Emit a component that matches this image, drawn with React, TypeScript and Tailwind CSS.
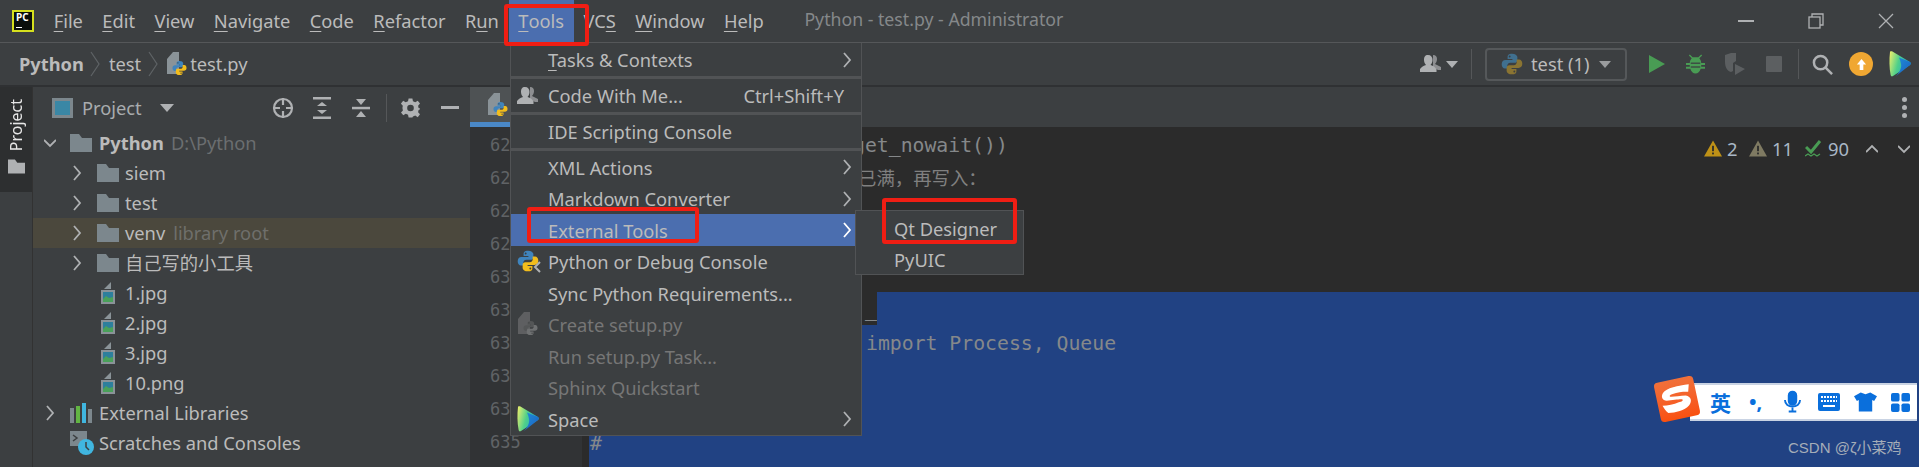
import React from 'react'

// PyCharm window with the Tools > External Tools menu open

const uiFont = { fontFamily: '"Noto Sans", "Noto Sans CJK SC", sans-serif' }

function Folder({ className = 'w-[22px] h-[18px]' }: { className?: string }) {
  return (
    <svg viewBox="0 0 22 18" className={className}>
      <path d="M0 0h9l3 4h10v14H0z" fill="#7c878d" />
    </svg>
  )
}

function Chevron({ down = false, color = '#afb1b3' }: { down?: boolean; color?: string }) {
  return (
    <svg viewBox="0 0 12 16" className="w-[12px] h-[16px]" fill="none" stroke={color} strokeWidth="1.8">
      {down ? <path d="M0 5l6 6 6-6" /> : <path d="M3 1l6 7-6 7" />}
    </svg>
  )
}

function PythonLogo({ className = 'w-[18px] h-[18px]', blue = '#3f84bd', yellow = '#f2bd1c' }: { className?: string; blue?: string; yellow?: string }) {
  const snake = 'M8 .5C5.4.5 4.8 1.6 4.8 2.8v1.6H8.300v.7H3.200C1.700 5.100.5 6.200.5 8.100c0 1.900 1 3.100 2.400 3.100h1.700V9.300c0-1.300 1-2.200 2.100-2.200h3.300c1 0 1.900-.8 1.900-1.900V2.800C11.500 1.500 10.500.5 8 .5z'
  return (
    <svg viewBox="0 0 16 16" className={className}>
      <path d={snake} fill={blue} />
      <path d={snake} fill={yellow} transform="rotate(180 8 8)" />
      <circle cx="6.300" cy="2.500" r=".7" fill="#3c3f41" />
      <circle cx="9.700" cy="13.500" r=".7" fill="#3c3f41" />
    </svg>
  )
}

function SpaceLogo({ className = 'w-[22px] h-[26px]' }: { className?: string }) {
  return (
    <svg viewBox="0 0 22 26" className={className}>
      <defs>
        <linearGradient id="spaceLeft" x1="0" y1="0" x2="1" y2="0.3">
          <stop offset="0" stopColor="#f4f16a" />
          <stop offset="0.5" stopColor="#4fd08a" />
          <stop offset="1" stopColor="#1fa7c9" />
        </linearGradient>
        <linearGradient id="spaceRight" x1="0" y1="0" x2="1" y2="1">
          <stop offset="0" stopColor="#1f8fd8" />
          <stop offset="1" stopColor="#1c5fc0" />
        </linearGradient>
      </defs>
      <path d="M1 1c0-1 1-1 2-.7L21 11c1 .8 1 2 0 3L4 25c-1 .7-2 .4-2.300-.7C.2 17 .2 8 1 1z" fill="url(#spaceLeft)" />
      <path d="M10 6.500L21 11c1 .8 1 2 0 3L7 25c3-3 6-8 5-12-.3-2.300-1-4.500-2-6.500z" fill="url(#spaceRight)" />
    </svg>
  )
}

function FileShape({ children }: { children: React.ReactNode }) {
  return (
    <span className="relative w-[20px] h-[24px] block">
      <svg viewBox="0 0 20 24" className="absolute inset-0 w-[20px] h-[24px]">
        <path d="M7 0h6v22H1V7z" fill="#8a9398" />
      </svg>
      {children}
    </span>
  )
}

function PyFile() {
  return (
    <FileShape>
      <span className="absolute left-[6px] top-[8px]">
        <PythonLogo className="w-[15px] h-[16px]" />
      </span>
    </FileShape>
  )
}

function ImageFile() {
  return (
    <svg viewBox="0 0 16 22" className="w-[16px] h-[22px]">
      <path d="M11 0v7H4z" fill="#8a9398" />
      <rect x="1" y="8" width="14" height="14" fill="#8a9398" />
      <rect x="3" y="10" width="10" height="10" fill="#2d7f9c" />
      <path d="M3 20v-3l3-3 3 2 4-1v5z" fill="#4aa15a" />
    </svg>
  )
}

function UserIcon({ className = 'w-[22px] h-[20px]', color = '#afb1b3' }: { className?: string; color?: string }) {
  return (
    <svg viewBox="0 0 22 20" className={className} fill={color}>
      <path d="M13 1c3 0 4 2 4 4 0 2-1 4-2 5l6 3v3h-3l-5-3z" opacity=".7" />
      <path d="M8 1c3 0 4.500 2 4.500 5 0 2-1 4-2 5 3 1 5 2.500 6 4v3H0v-3c1-1.500 3-3 6-4-1-1-2-3-2-5 0-3 1-5 4-5z" />
    </svg>
  )
}

function Triangle({ color }: { color: string }) {
  return (
    <svg viewBox="0 0 20 18" className="w-[18px] h-[17px]">
      <path d="M10 0l10 18H0z" fill={color} />
      <rect x="9" y="6" width="2" height="6" fill="#2b2b2b" />
      <rect x="9" y="13.500" width="2" height="2" fill="#2b2b2b" />
    </svg>
  )
}

function TopMenu() {
  const items: [string, string, string][] = [
    ['', 'F', 'ile'],
    ['', 'E', 'dit'],
    ['', 'V', 'iew'],
    ['', 'N', 'avigate'],
    ['', 'C', 'ode'],
    ['', 'R', 'efactor'],
    ['R', 'u', 'n'],
  ]
  return (
    <div className="flex items-center h-full text-[18.300px] text-[#bbbbbb]">
      {items.map(([pre, key, post]) => (
        <span key={key + post} className="px-[9.700px] h-full flex items-center whitespace-pre">
          {pre}<u className="underline-offset-[3px]">{key}</u>{post}
        </span>
      ))}
      <span className="px-[9.700px] h-full flex items-center bg-[#4b6eaf] whitespace-pre"><u className="underline-offset-[3px]">T</u>ools</span>
      <span className="px-[9.700px] h-full flex items-center whitespace-pre">VC<u className="underline-offset-[3px]">S</u></span>
      <span className="px-[9.700px] h-full flex items-center whitespace-pre"><u className="underline-offset-[3px]">W</u>indow</span>
      <span className="px-[9.700px] h-full flex items-center whitespace-pre"><u className="underline-offset-[3px]">H</u>elp</span>
    </div>
  )
}

function TitleBar() {
  return (
    <div className="h-[43px] flex items-center border-b border-[#555759] shrink-0">
      <div className="w-[44px] pl-[12px] flex items-center">
        <div className="w-[22px] h-[22px] border-2 border-[#d6e01e] bg-[#0b0f0c] relative">
          <span className="absolute left-[2px] top-[0px] text-[10px] font-bold text-white leading-[11px]">PC</span>
          <span className="absolute left-[2px] bottom-[2px] w-[6px] h-[1px] bg-white" />
        </div>
      </div>
      <TopMenu />
      <span className="ml-[31px] text-[17.700px] text-[#85888a] whitespace-nowrap -mt-[3px]">Python - test.py - Administrator</span>
      <div className="ml-auto flex items-center h-full pr-[25px]">
        <svg viewBox="0 0 16 2" className="w-[16px] h-[2px] mr-[54px]"><rect width="16" height="2" fill="#afb1b3" /></svg>
        <svg viewBox="0 0 16 16" className="w-[16px] h-[16px] mr-[54px]" fill="none" stroke="#afb1b3" strokeWidth="1.300">
          <rect x="1" y="4" width="11" height="11" />
          <path d="M4 4V1h11v11h-3" />
        </svg>
        <svg viewBox="0 0 16 16" className="w-[16px] h-[16px]" fill="none" stroke="#afb1b3" strokeWidth="1.300"><path d="M1 1l14 14M15 1L1 15" /></svg>
      </div>
    </div>
  )
}

function NavBar() {
  return (
    <div className="h-[44px] flex items-center border-b-[2px] border-[#2f3133] shrink-0 text-[18.300px] text-[#bbbbbb]">
      <span className="pl-[19px] font-bold">Python</span>
      <svg viewBox="0 0 10 26" className="w-[10px] h-[26px] mx-[6px]" fill="none" stroke="#5f6366" strokeWidth="1.200"><path d="M1 1l8 12-8 12" /></svg>
      <span className="ml-[3px]">test</span>
      <svg viewBox="0 0 10 26" className="w-[10px] h-[26px] mx-[7px]" fill="none" stroke="#5f6366" strokeWidth="1.200"><path d="M1 1l8 12-8 12" /></svg>
      <span className="ml-[1px]"><PyFile /></span>
      <span className="ml-[4px]">test.py</span>
      <div className="ml-auto flex items-center pr-[8px]">
        <UserIcon />
        <svg viewBox="0 0 12 7" className="w-[12px] h-[7px] ml-[4px]"><path d="M0 0h12L6 7z" fill="#afb1b3" /></svg>
        <div className="w-[1px] h-[30px] bg-[#555759] ml-[13px] mr-[13px]" />
        <div className="w-[142px] h-[33px] border-2 border-[#55585a] rounded-[4px] flex items-center pl-[14px]">
          <PythonLogo className="w-[22px] h-[22px]" blue="#40708f" yellow="#8a7432" />
          <span className="ml-[8px]">test (1)</span>
          <svg viewBox="0 0 12 7" className="w-[12px] h-[7px] ml-[10px]"><path d="M0 0h12L6 7z" fill="#9a9c9e" /></svg>
        </div>
        <div className="w-[39px] flex justify-center ml-[10px]">
          <svg viewBox="0 0 16 18" className="w-[16px] h-[18px]"><path d="M0 0l16 9-16 9z" fill="#499c54" /></svg>
        </div>
        <div className="w-[39px] flex justify-center">
          <svg viewBox="0 0 20 20" className="w-[19px] h-[20px]" fill="#499c54">
            <path d="M4 0l3 3h6l3-3 1 1-3 3c1 1 2 3 2 5h4v2h-4v2h4v2h-4.500c-1 3-3 5-5.500 5s-4.500-2-5.500-5H0v-2h4v-2H0V9h4c0-2 1-4 2-5L3 1z" />
            <rect x="5" y="8.500" width="10" height="1.300" fill="#3c3f41" />
            <rect x="5" y="12.500" width="10" height="1.300" fill="#3c3f41" />
          </svg>
        </div>
        <div className="w-[39px] flex justify-center">
          <svg viewBox="0 0 22 22" className="w-[22px] h-[22px]">
            <path d="M1 2l6-2h5v8l-3 2v8l-2 1C3 18 1 14 1 9z" fill="#5c5f61" />
            <path d="M11 11l10 5-10 6z" fill="#5c5f61" />
          </svg>
        </div>
        <div className="w-[39px] flex justify-center"><div className="w-[16px] h-[16px] bg-[#5c5f61] rounded-[1px]" /></div>
        <div className="w-[1px] h-[30px] bg-[#555759] ml-[5px]" />
        <div className="w-[47px] flex justify-center">
          <svg viewBox="0 0 22 22" className="w-[21px] h-[21px]" fill="none" stroke="#afb1b3" strokeWidth="2.600">
            <circle cx="9" cy="9" r="7" />
            <path d="M14 14l7 7" />
          </svg>
        </div>
        <div className="w-[24px] h-[24px] rounded-full bg-[#f0a732] flex items-center justify-center ml-[3px]">
          <svg viewBox="0 0 12 12" className="w-[11px] h-[11px]" fill="#ffffff"><path d="M6 0l5 6H8v6H4V6H1z" /></svg>
        </div>
        <div className="ml-[16px]"><SpaceLogo /></div>
      </div>
    </div>
  )
}

const treeRows = [
  { label: 'siem', icon: 'folder' },
  { label: 'test', icon: 'folder' },
]

const imageFiles = ['1.jpg', '2.jpg', '3.jpg', '10.png']

function TreeFolderRow({ label, hint, className = '' }: { label: string; hint?: string; className?: string }) {
  return (
    <div className={`h-[30px] flex items-center pl-[38px] ${className}`}>
      <span className="w-[26px] flex"><Chevron /></span>
      <Folder />
      <span className="ml-[6px]">{label}</span>
      {hint && <span className="ml-[8px] text-[#6f6f6b]">{hint}</span>}
    </div>
  )
}

function ProjectPanel() {
  return (
    <div className="w-[437px] shrink-0 flex flex-col text-[18.300px] text-[#bbbbbb]">
      <div className="h-[41px] flex items-center pl-[19px]">
        <div className="w-[21px] h-[20px] border-[3px] border-[#7c878d] bg-[#3a87a5]" />
        <span className="ml-[9px] text-[#a9acae]">Project</span>
        <svg viewBox="0 0 14 8" className="w-[14px] h-[8px] ml-[18px]"><path d="M0 0h14L7 8z" fill="#afb1b3" /></svg>
        <div className="ml-[98px] flex items-center">
          <svg viewBox="0 0 22 22" className="w-[22px] h-[22px]" fill="none" stroke="#afb1b3" strokeWidth="2.200">
            <circle cx="11" cy="11" r="9" />
            <path d="M11 1v7M11 14v7M1 11h7M14 11h7" />
          </svg>
          <svg viewBox="0 0 18 22" className="w-[18px] h-[22px] ml-[19px]" fill="#afb1b3">
            <rect width="18" height="2.500" />
            <rect y="19.500" width="18" height="2.500" />
            <path d="M9 5l5 4H4zM9 17l5-4H4z" />
          </svg>
          <svg viewBox="0 0 18 22" className="w-[18px] h-[22px] ml-[21px]" fill="#afb1b3">
            <rect y="9.800" width="18" height="2.500" />
            <path d="M9 8L4 2h10zM9 14l5 6H4z" />
          </svg>
          <div className="w-[1px] h-[28px] bg-[#555759] ml-[16px]" />
          <svg viewBox="0 0 20 20" className="w-[19px] h-[20px] ml-[14px]">
            <path fillRule="evenodd" fill="#afb1b3" d="M8 0h4l.600 3 2.400 1 2.600-1.700 2.400 3-2 2.200.500 2.500 2.500 1v0l-2.500 1-.500 2.500 2 2.200-2.400 3-2.600-1.700-2.400 1L12 20H8l-.600-3-2.400-1-2.600 1.700-2.400-3 2-2.200L1.500 10 1.900 7.500l-2-2.200 2.400-3L4.900 4l2.500-1zM10 6.500a3.500 3.500 0 100 7 3.500 3.500 0 000-7z" />
          </svg>
          <div className="w-[18px] h-[3px] bg-[#afb1b3] ml-[21px]" />
        </div>
      </div>
      <div className="h-[30px] flex items-center pl-[11px]">
        <span className="w-[26px] flex"><Chevron down /></span>
        <Folder />
        <span className="ml-[7px] font-bold">Python</span>
        <span className="ml-[7px] text-[#6b6e70]">D:\Python</span>
      </div>
      {treeRows.map(r => <TreeFolderRow key={r.label} label={r.label} />)}
      <TreeFolderRow label="venv" hint="library root" className="bg-[#4b483d]" />
      <TreeFolderRow label="自己写的小工具" />
      {imageFiles.map(name => (
        <div key={name} className="h-[30px] flex items-center pl-[67px]">
          <ImageFile />
          <span className="ml-[9px]">{name}</span>
        </div>
      ))}
      <div className="h-[30px] flex items-center pl-[11px]">
        <span className="w-[26px] flex"><Chevron /></span>
        <svg viewBox="0 0 22 20" className="w-[22px] h-[20px]">
          <rect x="0" y="5" width="4" height="15" fill="#7c878d" />
          <rect x="6" y="3" width="4" height="17" fill="#62b543" />
          <rect x="12" y="0" width="4" height="20" fill="#40b6e0" />
          <rect x="18" y="6" width="4" height="14" fill="#7c878d" />
        </svg>
        <span className="ml-[7px]">External Libraries</span>
      </div>
      <div className="h-[30px] flex items-center pl-[37px]">
        <svg viewBox="0 0 24 24" className="w-[24px] h-[24px]">
          <rect x="0" y="0" width="17" height="15" fill="#7c878d" />
          <path d="M3 4l4 3-4 3" stroke="#3c3f41" strokeWidth="1.500" fill="none" />
          <circle cx="16" cy="16" r="8" fill="#40b6e0" />
          <path d="M16 11v5l3 3" stroke="#3c3f41" strokeWidth="1.500" fill="none" />
        </svg>
        <span className="ml-[5px]">Scratches and Consoles</span>
      </div>
    </div>
  )
}

const lineNumbers = [626, 627, 628, 629, 630, 631, 632, 633, 634, 635]

function Editor() {
  const monoText = 'font-["DejaVu_Sans_Mono",monospace] text-[19.800px] text-[#85888a] whitespace-pre'
  return (
    <div className="flex-1 min-w-0 flex flex-col relative">
      <div className="h-[40px] flex shrink-0 relative">
        <div className="w-[40px] h-full bg-[#4e5254] border-b-[5px] border-[#4a88c7] flex items-center pl-[17px]">
          <PyFile />
        </div>
        <div className="ml-auto flex flex-col gap-[3px] justify-center pr-[12px]">
          <span className="w-[5px] h-[5px] rounded-full bg-[#afb1b3]" />
          <span className="w-[5px] h-[5px] rounded-full bg-[#afb1b3]" />
          <span className="w-[5px] h-[5px] rounded-full bg-[#afb1b3]" />
        </div>
      </div>
      <div className="flex-1 flex min-h-0 bg-[#2b2b2b]">
        <div className="w-[112px] bg-[#313335] shrink-0 pl-[20px]">
          {lineNumbers.map(n => (
            <div key={n} className="h-[33px] flex items-center pt-[5px] font-['DejaVu_Sans_Mono',monospace] text-[17px] text-[#606366]">{n}</div>
          ))}
        </div>
        <div className="w-[7px] shrink-0" />
        <div className="flex-1 min-w-0">
          <div className={`h-[33px] flex items-center pl-[264px] pt-[4px] ${monoText}`}>get_nowait())</div>
          <div className="h-[33px] flex items-center pl-[269px] pt-[2px] text-[18.400px] text-[#808080] font-['Noto_Sans_CJK_SC',sans-serif]">已满，再写入：</div>
          <div className="h-[33px]" />
          <div className="h-[33px]" />
          <div className="h-[33px]" />
          <div className="h-[33px] flex">
            <div className={`w-[288px] flex items-center justify-end pt-[2px] ${monoText}`}>_</div>
            <div className="flex-1 bg-[#214283]" />
          </div>
          <div className={`h-[33px] flex items-center bg-[#214283] pl-[277px] pt-[4px] ${monoText}`}>import Process, Queue</div>
          <div className="h-[33px] bg-[#214283]" />
          <div className="h-[33px] bg-[#214283]" />
          <div className={`h-[43px] bg-[#214283] pl-[1px] pt-[5px] ${monoText}`}>#</div>
        </div>
      </div>
      <div className="absolute right-[9px] top-[48px] flex items-center text-[18.400px] text-[#a9b7c6]">
        <Triangle color="#be9117" />
        <span className="ml-[5px] w-[22px]">2</span>
        <Triangle color="#7f7a62" />
        <span className="ml-[5px] w-[33px]">11</span>
        <svg viewBox="0 0 18 18" className="w-[18px] h-[18px]" fill="none" stroke="#499c54">
          <path d="M1 7l5 5 9-11" strokeWidth="3" />
          <path d="M0 16l3-2 3 2 3-2 3 2 3-2" strokeWidth="1.300" />
        </svg>
        <span className="ml-[5px] w-[38px]">90</span>
        <span className="rotate-180 flex"><Chevron down /></span>
        <span className="ml-[20px] flex"><Chevron down /></span>
      </div>
    </div>
  )
}

function MenuRow({ label, hint, arrow, active, disabled, className = 'h-[31.500px] pt-[1px]', icon, underline }: {
  label: string
  hint?: string
  arrow?: boolean
  active?: boolean
  disabled?: boolean
  className?: string
  icon?: React.ReactNode
  underline?: boolean
}) {
  return (
    <div className={`flex items-center relative pl-[37px] pr-[8px] ${className} ${active ? 'bg-[#4b6eaf]' : ''} ${disabled ? 'text-[#767676]' : 'text-[#bbbbbb]'}`}>
      {icon && <span className="absolute left-[6px] top-1/2 -translate-y-1/2 flex">{icon}</span>}
      <span className="whitespace-pre">
        {underline ? <><u className="underline-offset-[3px]">{label[0]}</u>{label.slice(1)}</> : label}
      </span>
      {hint && <span className="ml-auto pr-[9px]">{hint}</span>}
      {arrow && <span className="ml-auto flex"><Chevron color={active ? '#ffffff' : '#afb1b3'} /></span>}
    </div>
  )
}

function ToolsMenu() {
  const sep = 'h-[3px] bg-[#515355]'
  const consoleIcon = (
    <span className="relative block w-[24px] h-[26px]">
      <PythonLogo className="w-[22px] h-[26px]" />
      <svg viewBox="0 0 10 12" className="absolute right-[-2px] bottom-[1px] w-[10px] h-[12px]" fill="none" stroke="#afb1b3" strokeWidth="2"><path d="M7 1L2 6l5 5" /></svg>
    </span>
  )
  return (
    <div className="absolute left-[510px] top-[43px] w-[352px] h-[393px] bg-[#3c3f41] border border-[#515355] border-t-0 text-[18.300px]">
      <MenuRow label="Tasks & Contexts" underline arrow className="h-[33px]" />
      <div className={sep} />
      <MenuRow label="Code With Me..." hint="Ctrl+Shift+Y" className="h-[33px]" icon={<UserIcon className="w-[22px] h-[20px]" />} />
      <div className={sep} />
      <MenuRow label="IDE Scripting Console" className="h-[33px]" />
      <div className={sep} />
      <MenuRow label="XML Actions" arrow />
      <MenuRow label="Markdown Converter" arrow />
      <MenuRow label="External Tools" arrow active />
      <MenuRow label="Python or Debug Console" icon={consoleIcon} />
      <MenuRow label="Sync Python Requirements..." />
      <MenuRow label="Create setup.py" disabled icon={<span className="grayscale opacity-40 block"><PyFile /></span>} />
      <MenuRow label="Run setup.py Task..." disabled />
      <MenuRow label="Sphinx Quickstart" disabled />
      <MenuRow label="Space" arrow icon={<SpaceLogo />} />
    </div>
  )
}

function SubMenu() {
  return (
    <div className="absolute left-[855px] top-[210px] w-[169px] h-[65px] bg-[#3c3f41] border border-[#515355] text-[18.300px] text-[#bbbbbb] pl-[38px] pt-[2px]">
      <div className="h-[31px] flex items-center">Qt Designer</div>
      <div className="h-[31px] flex items-center">PyUIC</div>
    </div>
  )
}

function SogouBar() {
  return (
    <div className="absolute left-[1653px] top-[375px] w-[264px] h-[46px]">
      <div className="absolute left-[37px] top-[8px] right-0 h-[38px] bg-white border-y-2 border-[#c9d3e3] flex items-center pl-[20px] text-[#0a6fdc]">
        <span className="text-[21px] font-bold font-['Noto_Sans_CJK_SC',sans-serif] w-[21px] leading-none">英</span>
        <span className="ml-[18px] w-[16px] text-[20px] font-bold leading-none whitespace-pre">•,</span>
        <svg viewBox="0 0 18 22" className="w-[17px] h-[24px] ml-[19px]" fill="none" stroke="#0a6fdc" strokeWidth="2">
          <rect x="5" y="0" width="8" height="14" rx="4" fill="#0a6fdc" />
          <path d="M1 9c0 9 16 9 16 0M9 17v3M5 21h8" />
        </svg>
        <svg viewBox="0 0 22 18" className="w-[22px] h-[18px] ml-[17px]">
          <rect width="22" height="18" rx="2" fill="#0a6fdc" />
          <path d="M3 4h16M3 8h16" stroke="#ffffff" strokeWidth="2" strokeDasharray="2 1" />
          <rect x="5" y="12" width="12" height="2" fill="#ffffff" />
        </svg>
        <svg viewBox="0 0 24 20" className="w-[23px] h-[20px] ml-[14px]" fill="#0a6fdc">
          <path d="M7 0l5 2 5-2 7 4-3 5-2-1v12H5V8L3 9 0 4z" />
        </svg>
        <svg viewBox="0 0 20 20" className="w-[19px] h-[19px] ml-[14px]" fill="#0a6fdc">
          <rect width="9" height="9" rx="2" />
          <rect x="11" width="9" height="9" rx="2" />
          <rect y="11" width="9" height="9" rx="2" />
          <rect x="11" y="11" width="9" height="9" rx="2" />
        </svg>
      </div>
      <div className="absolute left-[3.500px] top-[3.500px] w-[40px] h-[40px] rounded-[4px] -rotate-[12deg] bg-gradient-to-b from-[#f0703a] to-[#f9500f] flex items-center justify-center">
        <svg viewBox="0 0 32 26" className="w-[34px] h-[27px]" fill="#ffffff">
          <path d="M30 1C20 0 8 0 4 4c-3 3-2 7 2 8 6 1 13 1 15 2 1 1-1 2-4 2-5 1-11 1-16 0 1 3 2 6 4 8 7 1 16 1 21-3 4-3 4-8-1-10-6-1-12-1-15-2-1-1 1-2 3-2 5-1 11 0 15 1z" />
        </svg>
      </div>
    </div>
  )
}

export default function App() {
  return (
    <div className="relative w-[1919px] h-[467px] overflow-hidden bg-[#3c3f41] flex flex-col" style={uiFont}>
      <TitleBar />
      <NavBar />
      <div className="flex-1 min-h-0 flex">
        <div className="w-[33px] shrink-0 border-r border-[#323232]">
          <div className="h-[105px] bg-[#2d2f30] flex flex-col items-center pt-[12px]">
            <span className="[writing-mode:vertical-rl] rotate-180 text-[16px] leading-none text-[#e6e6e6]">Project</span>
            <div className="mt-[8px]"><Folder className="w-[17px] h-[15px] [&>path]:fill-[#afb1b3]" /></div>
          </div>
        </div>
        <ProjectPanel />
        <Editor />
      </div>
      <ToolsMenu />
      <SubMenu />
      <div className="absolute left-[504px] top-[4px] w-[85px] h-[42px] border-4 border-[#f01e14] rounded-[3px]" />
      <div className="absolute left-[527px] top-[207px] w-[172px] h-[36px] border-4 border-[#f01e14] rounded-[3px]" />
      <div className="absolute left-[882px] top-[198px] w-[135px] h-[46px] border-4 border-[#f01e14] rounded-[3px]" />
      <SogouBar />
      <span className="absolute left-[1788px] top-[437px] text-[15px] text-[#a5adb8] whitespace-nowrap font-['Liberation_Sans','Noto_Sans_CJK_SC',sans-serif]">CSDN @ζ小菜鸡</span>
    </div>
  )
}
